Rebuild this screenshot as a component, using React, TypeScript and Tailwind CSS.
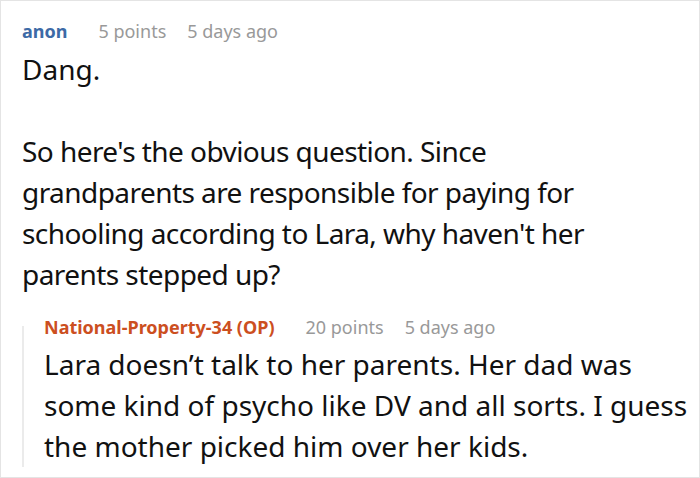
const font = { fontFamily: '"Noto Sans", "Open Sans", sans-serif' };

function Meta({ name, color, points, ago }: { name: string; color: string; points: string; ago: string }) {
  return (
    <div className="flex items-baseline text-[18px] leading-[24px] whitespace-nowrap">
      <span className={`font-bold ${color}`}>{name}</span>
      <span className="ml-[31px] text-[#999999]">{points}</span>
      <span className="ml-[21px] text-[#999999]">{ago}</span>
    </div>
  );
}

export default function App() {
  return (
    <div
      className="w-[700px] h-[478px] bg-white border border-[#e4e4e4] overflow-hidden pl-[21px] pt-[18px] text-[#111111]"
      style={font}
    >
      <Meta name="anon" color="text-[#3d6aa6]" points="5 points" ago="5 days ago" />
      <div className="mt-[6px] text-[28px] leading-[41px]">
        <p>Dang.</p>
        <p className="h-[41px]" />
        <p className="tracking-[-0.02em] pr-[60px]">
          So here's the obvious question. Since grandparents are responsible for paying for schooling according to Lara, why haven't her parents stepped up?
        </p>
      </div>
      <div className="mt-[20px] flex">
        <div className="w-[2px] mt-[11px] bg-[#ebebeb] shrink-0" />
        <div className="pl-[20px] flex-1">
          <Meta name="National-Property-34 (OP)" color="text-[#cc4f1f]" points="20 points" ago="5 days ago" />
          <p className="mt-[5px] text-[28px] leading-[41px]">
            Lara doesn’t talk to her parents. Her dad was some kind of psycho like DV and all sorts. I guess the mother picked him over her kids.
          </p>
        </div>
      </div>
    </div>
  );
}
